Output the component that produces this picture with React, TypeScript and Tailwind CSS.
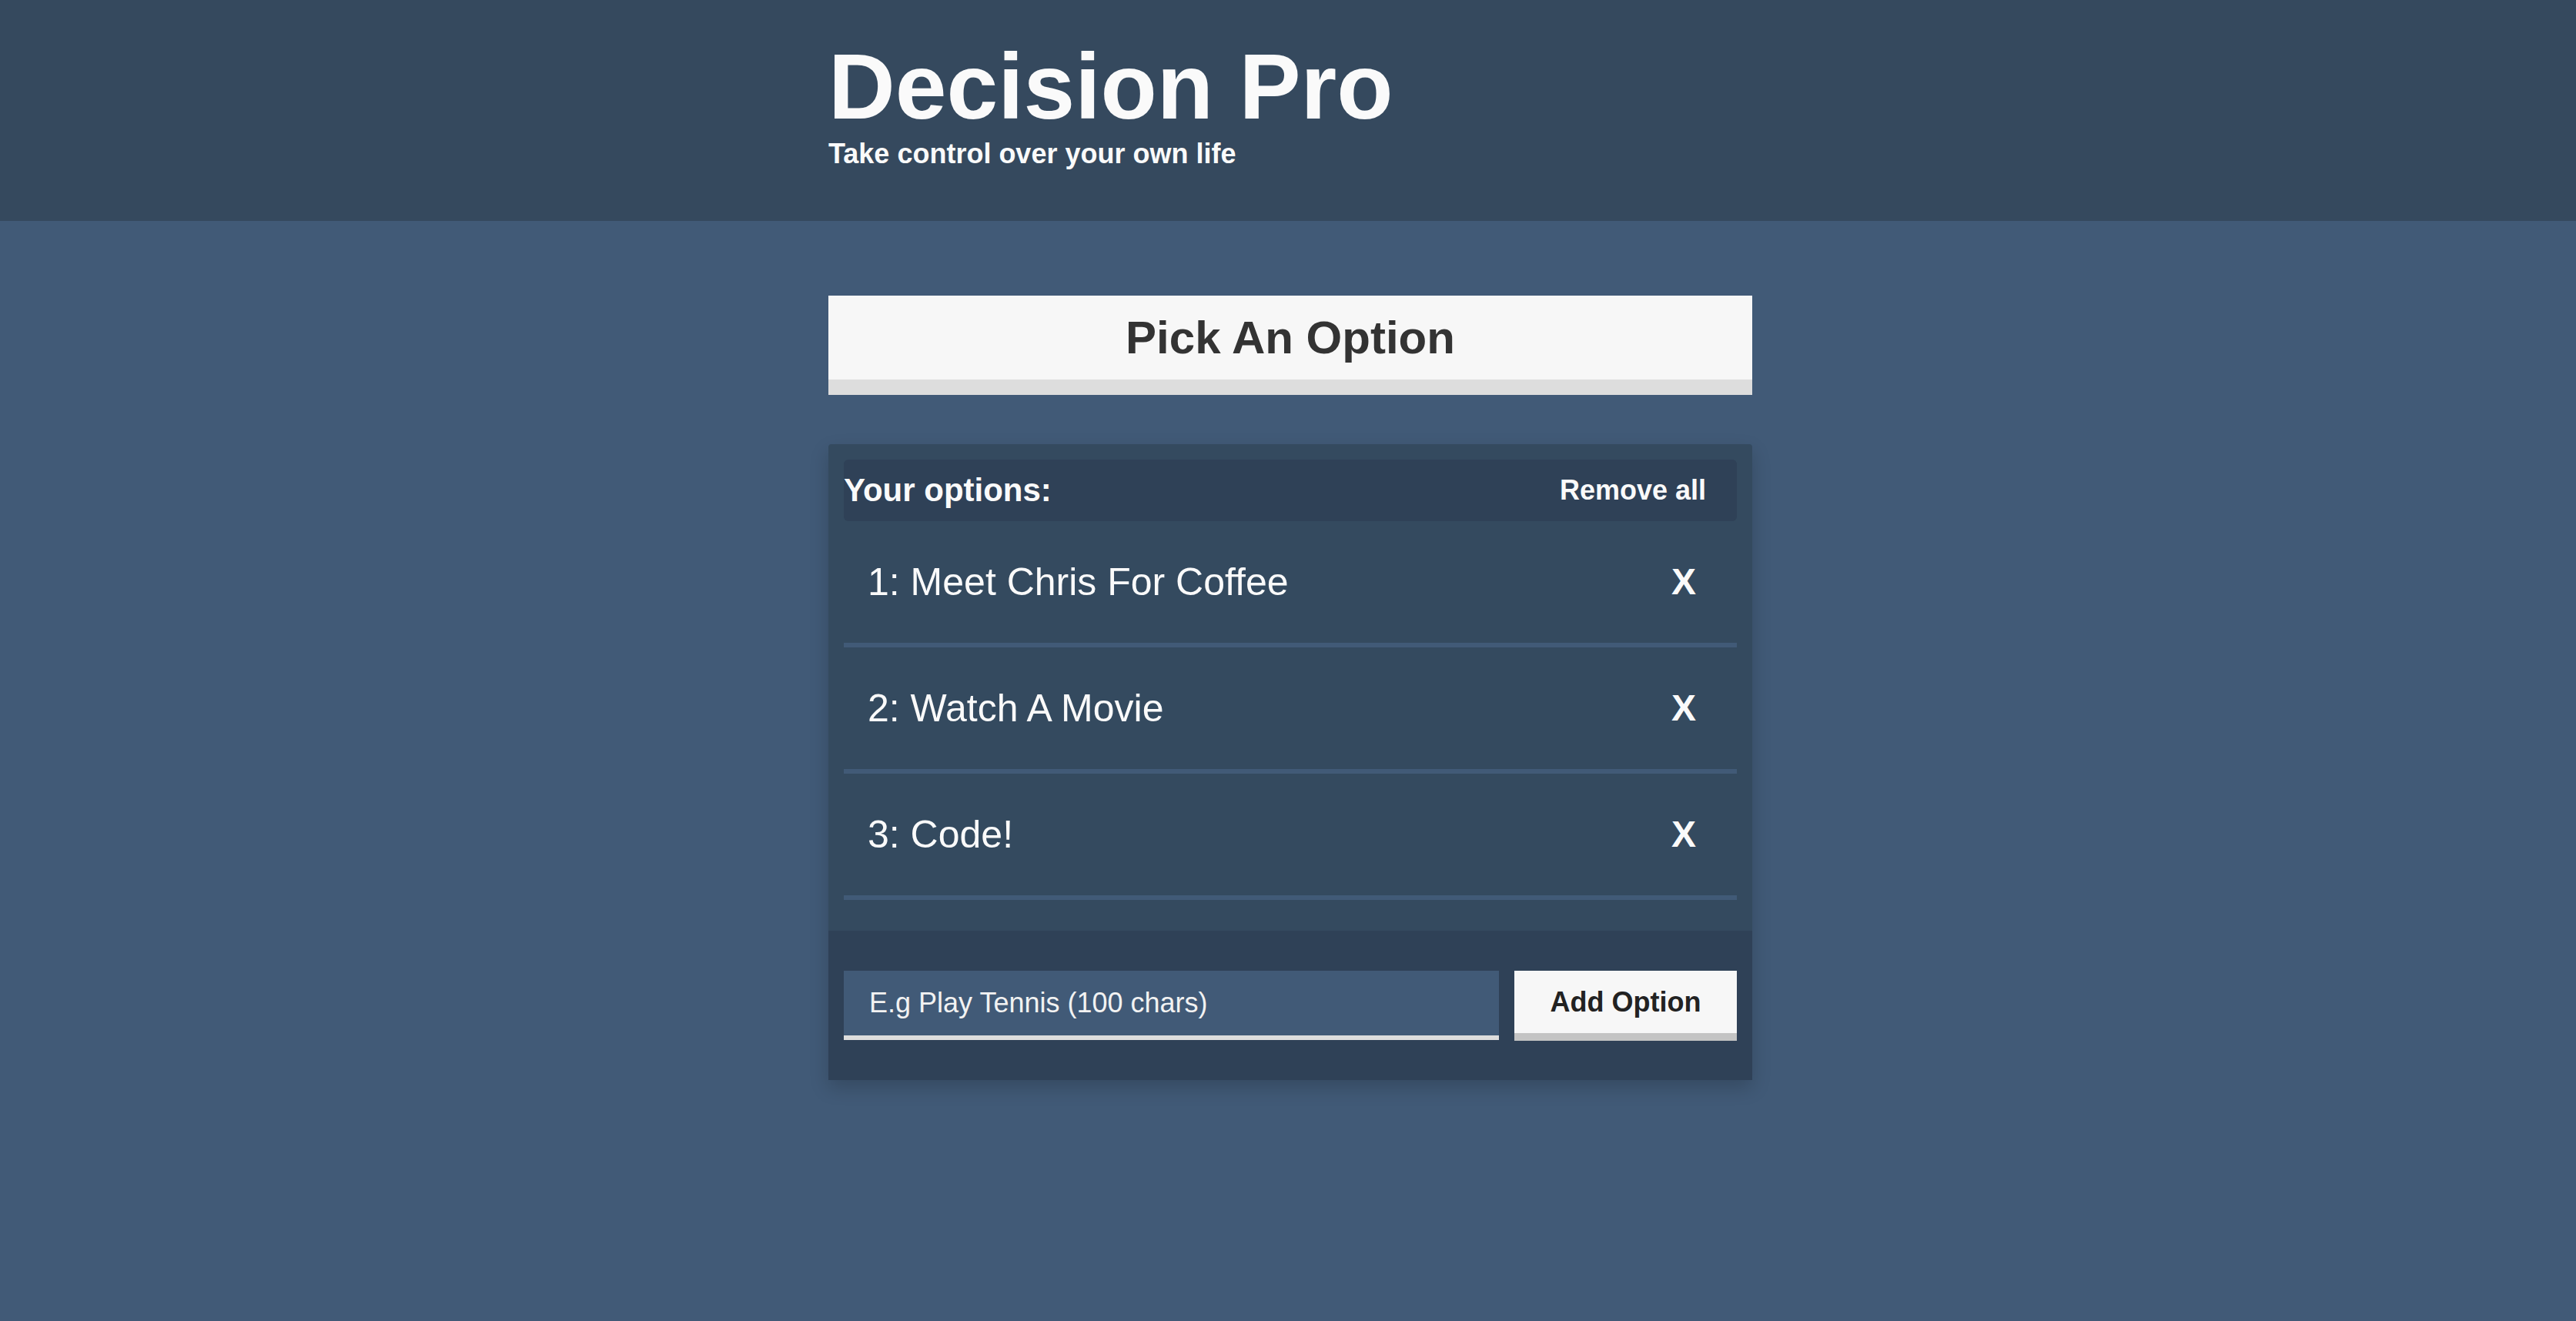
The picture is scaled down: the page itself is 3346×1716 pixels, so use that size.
import React from 'react';

const options = ['Meet Chris For Coffee', 'Watch A Movie', 'Code!'];

const OptionRow: React.FC<{ index: number; text: string }> = ({ index, text }) => (
  <div className="flex h-[164px] items-center justify-between border-b-[6px] border-[#415a77] pl-[31px] pr-[53px]">
    <p className="text-[50px] leading-[50px] text-[#fafafa]">
      {index}: {text}
    </p>
    <button className="text-[48px] font-bold leading-[48px] text-[#fafafa]">X</button>
  </div>
);

export default function App() {
  return (
    <div className="min-h-screen bg-[#415a77] font-['Liberation_Sans',Arial,sans-serif]">
      <header className="h-[287px] bg-[#35495e] pt-[52px] text-[#fafafa]">
        <div className="mx-auto w-[1206px] pl-[6px]">
          <h1 className="text-[120px] font-bold leading-[120px]">Decision Pro</h1>
          <h2 className="mt-[10px] text-[36px] font-bold leading-[36px]">Take control over your own life</h2>
        </div>
      </header>

      <main className="mx-auto w-[1206px] pl-[6px] pt-[97px]">
        <button className="flex h-[129px] w-full items-center justify-center border-b-[20px] border-[#dddddd] bg-[#f7f7f7] text-[60px] font-bold text-[#333333]">
          Pick An Option
        </button>

        <div className="mt-[64px] rounded-t-[4px] bg-[#344a5f] shadow-[0_10px_24px_rgba(0,0,0,0.18)]">
          <div className="px-[20px] pt-[20px] pb-[40px]">
            <div className="flex h-[80px] items-center justify-between rounded-[6px] bg-[#2f4157]">
              <h3 className="text-[42px] font-bold leading-[42px] text-[#fafafa]">Your options:</h3>
              <button className="pr-[40px] text-[36px] font-bold leading-[36px] text-[#fafafa]">Remove all</button>
            </div>
            {options.map((opt, i) => (
              <OptionRow key={opt} index={i + 1} text={opt} />
            ))}
          </div>

          <form
            className="flex gap-[20px] bg-[#2f4157] px-[20px] pt-[52px] pb-[51px]"
            onSubmit={(e) => e.preventDefault()}
          >
            <input
              autoFocus
              type="text"
              placeholder="E.g Play Tennis (100 chars)"
              className="h-[90px] flex-1 border-b-[6px] border-[#dddddd] bg-[#415a77] pl-[33px] text-[36px] text-[#fafafa] outline-none placeholder:text-[#f2f2f2]"
            />
            <button className="flex h-[91px] w-[289px] items-center justify-center border-b-[10px] border-[#c4c4c4] bg-[#f7f7f7] text-[36px] font-bold text-[#222222]">
              Add Option
            </button>
          </form>
        </div>
      </main>
    </div>
  );
}
